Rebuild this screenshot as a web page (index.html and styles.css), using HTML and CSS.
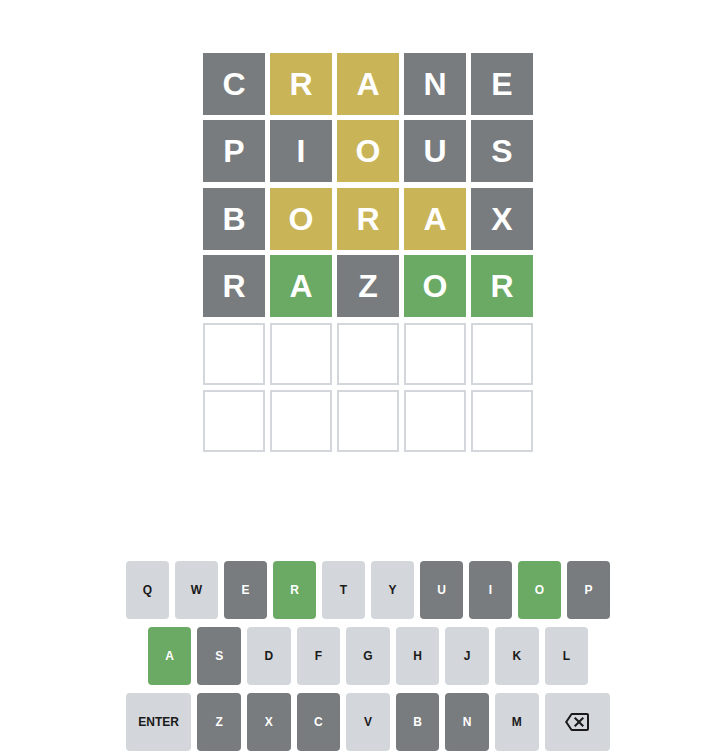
FILE: index.html
```html
<!DOCTYPE html>
<html>
<head>
<meta charset="utf-8">
<link rel="stylesheet" href="styles.css">
</head>
<body>
<div class="app">
  <div class="board">
    <div class="tile absent">C</div><div class="tile present">R</div><div class="tile present">A</div><div class="tile absent">N</div><div class="tile absent">E</div>
    <div class="tile absent">P</div><div class="tile absent">I</div><div class="tile present">O</div><div class="tile absent">U</div><div class="tile absent">S</div>
    <div class="tile absent">B</div><div class="tile present">O</div><div class="tile present">R</div><div class="tile present">A</div><div class="tile absent">X</div>
    <div class="tile absent">R</div><div class="tile correct">A</div><div class="tile absent">Z</div><div class="tile correct">O</div><div class="tile correct">R</div>
    <div class="tile"></div><div class="tile"></div><div class="tile"></div><div class="tile"></div><div class="tile"></div>
    <div class="tile"></div><div class="tile"></div><div class="tile"></div><div class="tile"></div><div class="tile"></div>
  </div>
  <div class="keyboard">
    <div class="krow">
      <button class="key">Q</button><button class="key">W</button><button class="key k-absent">E</button><button class="key k-correct">R</button><button class="key">T</button><button class="key">Y</button><button class="key k-absent">U</button><button class="key k-absent">I</button><button class="key k-correct">O</button><button class="key k-absent">P</button>
    </div>
    <div class="krow">
      <div class="half"></div>
      <button class="key k-correct">A</button><button class="key k-absent">S</button><button class="key">D</button><button class="key">F</button><button class="key">G</button><button class="key">H</button><button class="key">J</button><button class="key">K</button><button class="key">L</button>
      <div class="half"></div>
    </div>
    <div class="krow">
      <button class="key wide">ENTER</button><button class="key k-absent">Z</button><button class="key k-absent">X</button><button class="key k-absent">C</button><button class="key">V</button><button class="key k-absent">B</button><button class="key k-absent">N</button><button class="key">M</button>
      <button class="key wide" aria-label="backspace"><svg class="bs" viewBox="0 0 24 24" width="24" height="24"><path fill="#1a1a1b" d="M22 3H7c-.69 0-1.23.35-1.59.88L0 12l5.41 8.11c.36.53.9.89 1.59.89h15c1.1 0 2-.9 2-2V5c0-1.1-.9-2-2-2zm0 16H7.07L2.4 12l4.66-7H22v14zm-11.59-2L14 13.41 17.59 17 19 15.59 15.41 12 19 8.41 17.59 7 14 10.59 10.41 7 9 8.41 12.59 12 9 15.59z"/></svg></button>
    </div>
  </div>
</div>
</body>
</html>
```

FILE: styles.css
```css
* { box-sizing: border-box; }
html, body { margin: 0; padding: 0; background: #fff; }
body { font-family: "Liberation Sans", Arial, sans-serif; }
.app {
  width: 726px;
  height: 755px;
  padding-left: 10px;
  padding-top: 53px;
  display: flex;
  flex-direction: column;
  align-items: center;
  overflow: hidden;
}
.board {
  display: grid;
  grid-template-columns: repeat(5, 62px);
  grid-auto-rows: 62px;
  column-gap: 5px;
  row-gap: 5.4px;
}
.tile {
  border: 2px solid #d3d6da;
  background: #fff;
  display: flex;
  align-items: center;
  justify-content: center;
  font-size: 32px;
  font-weight: bold;
  color: #fff;
  line-height: 1;
}
.absent { background: #787c7e; border-color: #787c7e; }
.present { background: #c9b458; border-color: #c9b458; }
.correct { background: #6aaa64; border-color: #6aaa64; }
.keyboard {
  width: 484px;
  margin-top: 109px;
  display: flex;
  flex-direction: column;
  gap: 8px;
}
.krow {
  display: flex;
}
.half { flex: 0.5; }
.key {
  flex: 1;
  height: 58px;
  margin-right: 6px;
  border: 0;
  border-radius: 4px;
  background: #d3d6da;
  color: #1a1a1b;
  font-family: "Liberation Sans", Arial, sans-serif;
  font-size: 12px;
  font-weight: bold;
  padding: 0;
  display: flex;
  align-items: center;
  justify-content: center;
}
.key:last-of-type { margin-right: 0; }
.key.wide { flex: 1.5; }
.k-absent { background: #787c7e; color: #fff; }
.k-correct { background: #6aaa64; color: #fff; }
.bs { display: block; }
```
